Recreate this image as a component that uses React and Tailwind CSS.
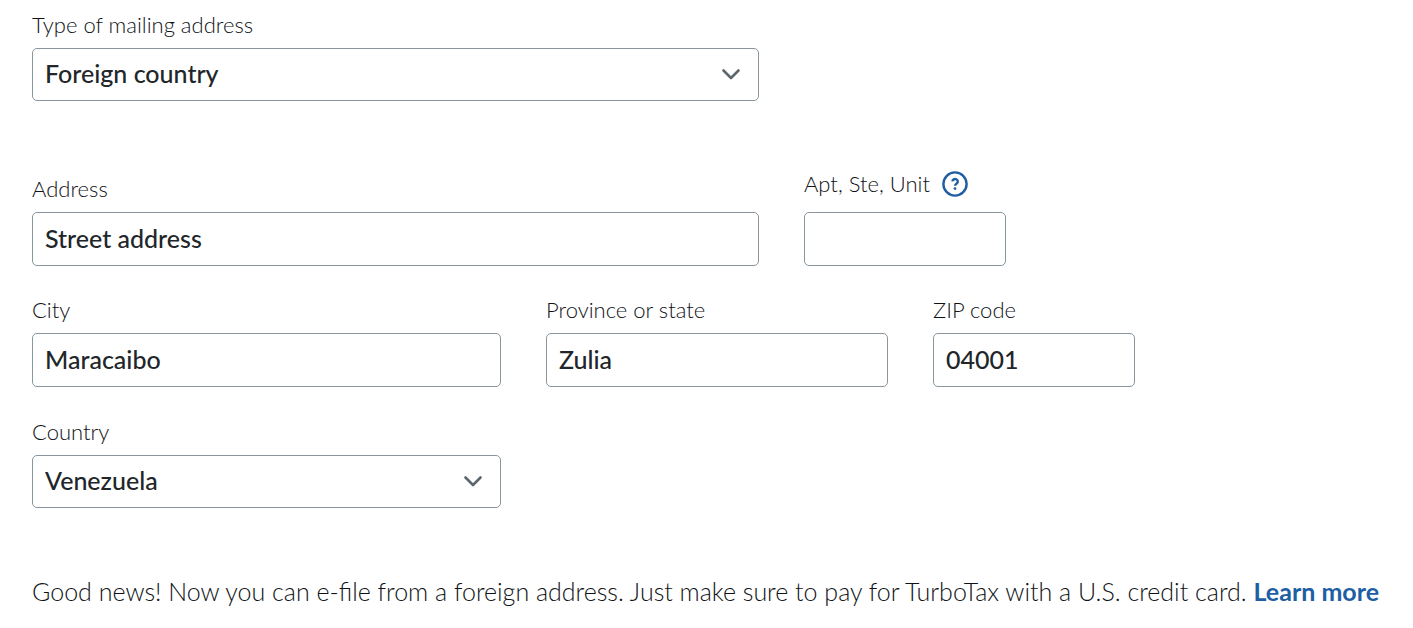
import React, { useState } from 'react';

const labelClass = 'block text-[22px] leading-[26px] font-light text-[#0f1316]';

const boxClass =
  'w-full px-3 pb-0.5 bg-white border border-[#8a969d] rounded-[5px] text-[25px] font-medium text-[#21262a] focus:outline-none focus:border-[#205ea3]';

const TextField = ({ id, label, help, value, onChange, className }) => (
  <div className={className}>
    <div className={help ? 'flex items-center gap-3 mb-[15px]' : 'mb-2.5'}>
      <label htmlFor={id} className={labelClass}>
        {label}
      </label>
      {help}
    </div>
    <input
      type="text"
      id={id}
      name={id}
      value={value}
      onChange={onChange}
      className={`${boxClass} block h-[54px]`}
    />
  </div>
);

const SelectField = ({ id, label, options, value, onChange, className }) => (
  <div className={className}>
    <label htmlFor={id} className={`${labelClass} mb-2.5`}>
      {label}
    </label>
    <div className="relative">
      <select
        id={id}
        name={id}
        value={value}
        onChange={onChange}
        className={`${boxClass} block h-[53px] appearance-none pr-12`}
      >
        {options.map((option) => (
          <option key={option} value={option}>
            {option}
          </option>
        ))}
      </select>
      <svg
        className="absolute right-4 top-1/2 -translate-y-1/2 pointer-events-none"
        width="24"
        height="24"
        viewBox="0 0 24 24"
        fill="none"
        stroke="#5c666d"
        strokeWidth="2.6"
        strokeLinecap="round"
        strokeLinejoin="round"
        aria-hidden="true"
      >
        <path d="M4.5 7.5L12 15L19.5 7.5" />
      </svg>
    </div>
  </div>
);

const HelpButton = () => (
  <button type="button" aria-label="Help with apartment, suite or unit" className="cursor-pointer">
    <svg width="26" height="26" viewBox="0 0 26 26" fill="none" stroke="#205ea3" aria-hidden="true">
      <circle cx="13" cy="13" r="11.6" strokeWidth="2.4" />
      <path d="M10.4 10.4a2.7 2.5 0 1 1 4.3 2.1c-1 .7-1.6 1-1.6 2.2" strokeWidth="2.4" />
      <circle cx="13" cy="17.6" r="1.4" fill="#205ea3" stroke="none" />
    </svg>
  </button>
);

const App = () => {
  const [formData, setFormData] = useState({
    addressType: 'Foreign country',
    address: 'Street address',
    unit: '',
    city: 'Maracaibo',
    province: 'Zulia',
    zip: '04001',
    country: 'Venezuela',
  });

  const handleInputChange = (e) => {
    const { name, value } = e.target;
    setFormData((prevData) => ({
      ...prevData,
      [name]: value,
    }));
  };

  return (
    <div className="min-h-screen bg-white pl-8 pr-3 pt-3 font-['Lato','Noto_Sans',sans-serif]">
      <form className="max-w-[1103px]" autoComplete="off">
        <SelectField
          id="addressType"
          label="Type of mailing address"
          options={['Foreign country', 'U.S. address', 'Military address']}
          value={formData.addressType}
          onChange={handleInputChange}
          className="max-w-[727px]"
        />

        <div className="flex items-end gap-[45px] mt-[70px] mb-[31px]">
          <TextField
            id="address"
            label="Address"
            value={formData.address}
            onChange={handleInputChange}
            className="grow max-w-[727px]"
          />
          <TextField
            id="unit"
            label="Apt, Ste, Unit"
            help={<HelpButton />}
            value={formData.unit}
            onChange={handleInputChange}
            className="w-[202px]"
          />
        </div>

        <div className="grid grid-cols-[469fr_342fr_202fr] gap-[45px] mb-8">
          <TextField id="city" label="City" value={formData.city} onChange={handleInputChange} />
          <TextField
            id="province"
            label="Province or state"
            value={formData.province}
            onChange={handleInputChange}
          />
          <TextField id="zip" label="ZIP code" value={formData.zip} onChange={handleInputChange} />
        </div>

        <SelectField
          id="country"
          label="Country"
          options={['Venezuela', 'Colombia', 'Mexico', 'Spain']}
          value={formData.country}
          onChange={handleInputChange}
          className="max-w-[469px]"
        />
      </form>

      <p className="mt-[65px] text-[25px] leading-9 font-light text-[#0f1316]">
        Good news! Now you can e-file from a foreign address. Just make sure to pay for TurboTax with a U.S. credit
        card.{' '}
        <a href="#learn-more" className="font-bold text-[#205ea3] hover:underline">
          Learn more
        </a>
      </p>
    </div>
  );
};

export default App;
